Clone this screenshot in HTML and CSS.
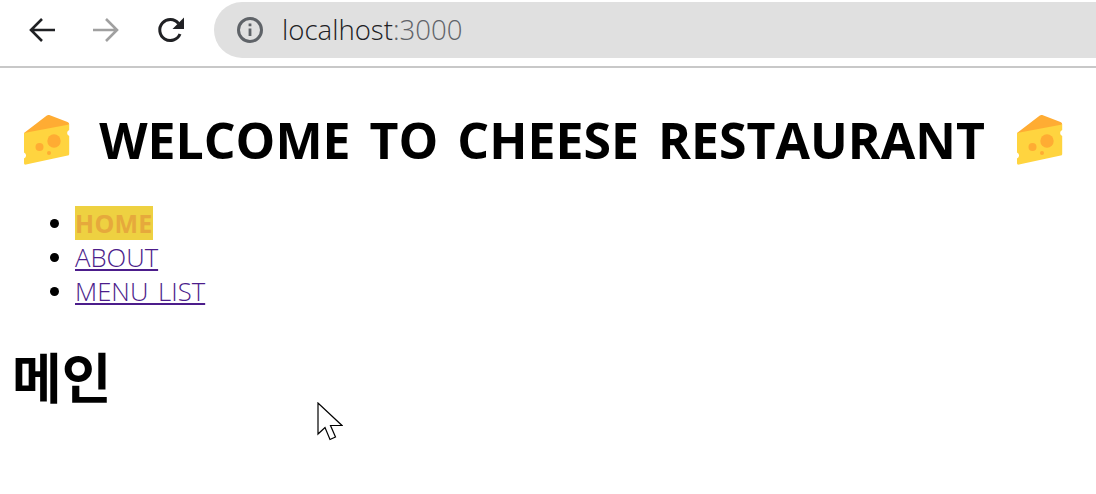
FILE: index.html
```html
<!DOCTYPE html>
<html lang="ko">
<head>
<meta charset="utf-8">
<title>localhost:3000</title>
<link rel="stylesheet" href="styles.css">
</head>
<body>
<header class="toolbar">
  <svg class="nav-icon back" viewBox="0 0 28 28"><path d="M27 14H3M14 3 3 14l11 11" fill="none" stroke="#202124" stroke-width="2.6"/></svg>
  <svg class="nav-icon forward" viewBox="0 0 28 28"><path d="M1 14h24M14 3l11 11-11 11" fill="none" stroke="#a0a0a0" stroke-width="2.6"/></svg>
  <svg class="nav-icon reload" viewBox="0 0 28 28"><path d="M23 18a10.500 10.500 0 1 1-1.500-10.500" fill="none" stroke="#202124" stroke-width="3"/><path d="M27 1.500V13H15.500z" fill="#202124"/></svg>
  <div class="omnibox">
    <svg class="info" viewBox="0 0 28 28"><circle cx="14" cy="14" r="11.500" fill="none" stroke="#5f6368" stroke-width="3"/><path d="M12.600 12.500h2.800V20h-2.800zM12.600 7.500h2.800v2.800h-2.800z" fill="#5f6368"/></svg>
    <span class="url"><span class="host">localhost</span><span class="port">:3000</span></span>
  </div>
</header>
<main class="page">
  <h1 class="title">
    <svg class="cheese" viewBox="0 0 50 54"><use href="#cheese"/></svg>
    <span>WELCOME TO CHEESE RESTAURANT</span>
    <svg class="cheese cheese-end" viewBox="0 0 50 54"><use href="#cheese"/></svg>
  </h1>
  <ul class="menu">
    <li><a class="active" href="#">HOME</a></li>
    <li><a href="#">ABOUT</a></li>
    <li><a href="#">MENU LIST</a></li>
  </ul>
  <h2 class="heading">메인</h2>
</main>
<svg class="cursor" viewBox="0 0 26 40"><path d="M1 1v31l7-6.500 5 12 5.500-2.500-5-11.500H25z" fill="#fff" stroke="#000" stroke-width="1.200"/></svg>
<svg class="defs" aria-hidden="true">
  <symbol id="cheese" viewBox="0 0 50 54">
    <path d="M2 20 24.500 2.800c1-.8 2.200-1 3.400-.5L45.500 9c1.200.5 1.700 1.200 1.700 2.500L26 22z" fill="#ffac33"/>
    <path d="M2 20 47.200 11.500V17a3.200 3.200 0 0 0 0 6V41c0 .9-.6 1.400-1.500 1.600L4 51.600c-1.200.3-2-.3-2-1.500V45.400a3.200 3.200 0 0 0 0-6z" fill="#ffd43f"/>
    <circle cx="32" cy="28" r="6.700" fill="#ffac33"/>
    <circle cx="17.500" cy="34" r="4" fill="#ffac33"/>
    <circle cx="27" cy="40" r="2" fill="#ffac33"/>
  </symbol>
</svg>
</body>
</html>
```

FILE: styles.css
```css
* { box-sizing: border-box; }
html, body { margin: 0; height: 100%; }
body {
  position: relative;
  overflow: hidden;
  background: #fff;
  color: #000;
  font-family: "Open Sans", "Noto Sans CJK KR", sans-serif;
}
.toolbar {
  display: flex;
  align-items: center;
  height: 68px;
  padding: 2px 0 8px 28px;
  border-bottom: 2px solid #c8c8c8;
}
.nav-icon { width: 28px; height: 28px; flex: none; }
.back { margin-right: 36px; }
.forward { margin-right: 37px; }
.reload { margin-right: 29px; }
.omnibox {
  flex: 1;
  display: flex;
  align-items: center;
  height: 56px;
  padding-left: 22px;
  border-radius: 28px 0 0 28px;
  background: #e0e0e0;
}
.info { width: 28px; height: 28px; margin-right: 18px; flex: none; }
.url { font-size: 27.6px; line-height: 1; font-weight: 300; }
.host { color: #202124; }
.port { color: #5f6368; }
.page { padding: 0 24px 0 12px; }
.title {
  display: flex;
  align-items: center;
  justify-content: center;
  gap: 27px;
  margin: 44px 0 0 3px;
  font-size: 50px;
  line-height: 56px;
  font-weight: 700;
  word-spacing: 6px;
}
.cheese { width: 50px; height: 54px; flex: none; }
.cheese-end { margin-left: 3px; }
.menu {
  margin: 38px 0 0;
  padding: 0 0 0 63px;
  font-size: 25.7px;
  font-weight: 300;
  line-height: 34px;
  word-spacing: 3px;
}
.menu a { color: #4c1d8b; }
.menu a.active {
  display: inline-block;
  background: #eed141;
  color: #e6a93c;
  font-size: 25px;
  font-weight: 700;
  letter-spacing: .25px;
  text-decoration: none;
}
.heading {
  margin: 30px 0 0;
  font-size: 54px;
  line-height: 78px;
  font-weight: 700;
}
.cursor {
  position: absolute;
  left: 317px;
  top: 402px;
  width: 26px;
  height: 40px;
}
.defs { position: absolute; width: 0; height: 0; }
```
